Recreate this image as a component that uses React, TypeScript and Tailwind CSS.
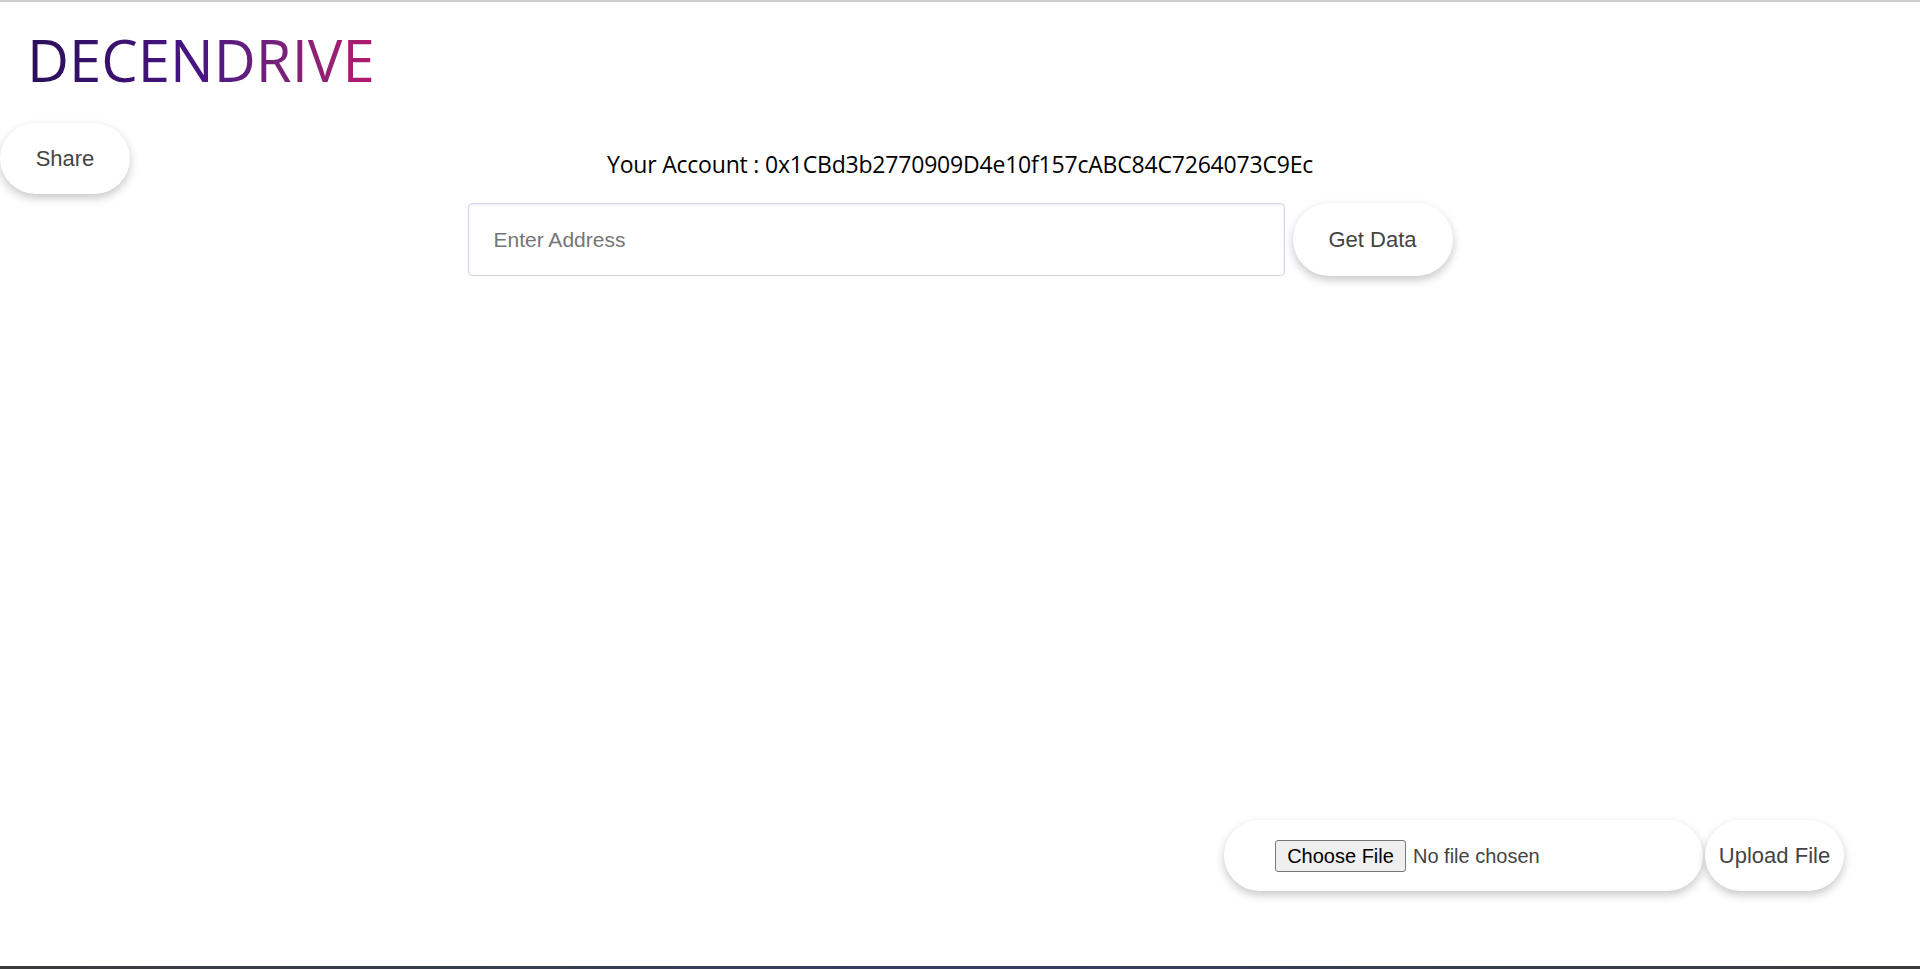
import React from "react";

export default function App() {
  const arial = { fontFamily: '"Liberation Sans", Arial, sans-serif' };
  return (
    <div className="w-full h-[969px] flex flex-col bg-white overflow-hidden">
      <div className="h-[2px] w-full bg-[#cdcdcd] shrink-0" />

      <div className="mt-[29px] pl-[27px] shrink-0">
        <h1
          className="inline-block text-[58px] leading-none font-normal bg-gradient-to-r from-[#2b0f5a] via-[#4a1482] to-[#b3166c] bg-clip-text text-transparent"
          style={{ fontFamily: '"Open Sans", "Noto Sans", sans-serif' }}
        >
          DECENDRIVE
        </h1>
      </div>

      <div className="mt-[34px] grid grid-cols-[1fr_auto_1fr] items-start shrink-0">
        <div className="justify-self-start">
          <button
            className="w-[130px] h-[71px] rounded-full bg-white text-[22px] text-[#444] shadow-[0_4px_10px_rgba(0,0,0,0.22)]"
            style={arial}
          >
            Share
          </button>
        </div>
        <p
          className="pt-[25px] text-[23px] leading-[32px] tracking-[-0.2px] text-black"
          style={{ fontFamily: '"Open Sans", "Noto Sans", sans-serif' }}
        >
          Your Account : 0x1CBd3b2770909D4e10f157cABC84C7264073C9Ec
        </p>
        <div />
      </div>

      <div className="mt-[9px] flex justify-center gap-[8px] shrink-0">
        <input
          placeholder="Enter Address"
          className="w-[817px] h-[73px] rounded-[4px] border border-[#d5d2ea] bg-white pl-[25px] text-[21px] text-[#333] placeholder:text-[#767676] outline-none shadow-[inset_0_1px_3px_rgba(120,110,190,0.12)]"
          style={arial}
        />
        <button
          className="w-[160px] h-[73px] rounded-full bg-white text-[22px] text-[#444] shadow-[0_4px_10px_rgba(0,0,0,0.22)]"
          style={arial}
        >
          Get Data
        </button>
      </div>

      <div className="flex-1" />

      <div className="flex justify-end items-center gap-[2px] pr-[76px] shrink-0">
        <div
          className="w-[479px] h-[71px] rounded-full bg-white shadow-[0_4px_10px_rgba(0,0,0,0.22)] flex items-center pl-[51px]"
          style={arial}
        >
          <span className="h-[32px] w-[131px] flex items-center justify-center rounded-[3px] border border-[#767676] bg-[#efefef] text-[20px] text-black">
            Choose File
          </span>
          <span className="ml-[7px] text-[20px] text-[#444]">No file chosen</span>
        </div>
        <button
          className="w-[139px] h-[71px] rounded-full bg-white text-[22px] text-[#444] shadow-[0_4px_10px_rgba(0,0,0,0.22)]"
          style={arial}
        >
          Upload File
        </button>
      </div>

      <div className="h-[75px] shrink-0" />
      <div className="h-[3px] w-full shrink-0 bg-gradient-to-r from-[#3b3b3b] via-[#363f62] to-[#3b3b3b]" />
    </div>
  );
}
